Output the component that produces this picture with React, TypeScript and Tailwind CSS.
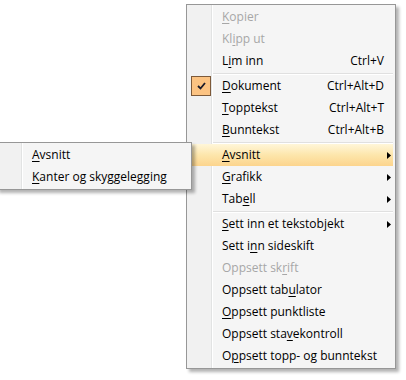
import React from 'react';

type Item = {
  label: React.ReactNode;
  shortcut?: string;
  disabled?: boolean;
  checked?: boolean;
  sub?: boolean;
  active?: boolean;
  sep?: boolean;
};

const U = ({ children }: { children: React.ReactNode }) => (
  <span className="underline underline-offset-[2px] decoration-[1px]">{children}</span>
);

const items: Item[] = [
  { label: <><U>K</U>opier</>, disabled: true },
  { label: <>Kl<U>i</U>pp ut</>, disabled: true },
  { label: <>L<U>i</U>m inn</>, shortcut: 'Ctrl+V' },
  { sep: true, label: null },
  { label: <><U>D</U>okument</>, shortcut: 'Ctrl+Alt+D', checked: true },
  { label: <><U>T</U>opptekst</>, shortcut: 'Ctrl+Alt+T' },
  { label: <><U>B</U>unntekst</>, shortcut: 'Ctrl+Alt+B' },
  { sep: true, label: null },
  { label: <><U>A</U>vsnitt</>, sub: true, active: true },
  { label: <><U>G</U>rafikk</>, sub: true },
  { label: <>Tab<U>e</U>ll</>, sub: true },
  { sep: true, label: null },
  { label: <><U>S</U>ett inn et tekstobjekt</>, sub: true },
  { label: <>Sett i<U>n</U>n sideskift</> },
  { label: <>Oppsett sk<U>r</U>ift</>, disabled: true },
  { label: <>Oppsett tab<U>u</U>lator</> },
  { label: <><U>O</U>ppsett punktliste</> },
  { label: <>Oppsett sta<U>v</U>ekontroll</> },
  { label: <>O<U>p</U>psett topp- og bunntekst</> },
];

const gutterBg =
  'bg-[linear-gradient(to_right,#f1f1f1_0px,#f1f1f1_24px,#e2e3e3_24px,#e2e3e3_25px,#ffffff_25px,#ffffff_26px,#f5f5f5_26px)]';

const Row = ({ item }: { item: Item }) => {
  if (item.sep) {
    return (
      <div className="h-[3px] ml-[24px] flex flex-col justify-center">
        <div className="h-px bg-[#e0e0e0]" />
        <div className="h-px bg-white" />
      </div>
    );
  }
  return (
    <div
      className={`relative h-[22px] flex items-center pl-[33px] ${
        item.active ? 'bg-gradient-to-b from-[#fff6d9] via-[#fde6ab] to-[#fcd48d]' : ''
      } ${item.disabled ? 'text-[#a7a7a7]' : 'text-black'}`}
    >
      {item.checked && (
        <div className="absolute left-[2px] top-[1px] w-[20px] h-[20px] border border-[#7d5a3a] bg-[#fcc382] flex items-center justify-center">
          <svg width="9" height="8" viewBox="0 0 9 8">
            <path d="M1 4 L3.5 6.5 L8 1" fill="none" stroke="#1a1a2a" strokeWidth="1.8" />
          </svg>
        </div>
      )}
      <span className="flex-1 whitespace-nowrap">{item.label}</span>
      {item.shortcut && <span className="pr-[9px] whitespace-nowrap">{item.shortcut}</span>}
      {item.sub && (
        <svg className="mr-[2px]" width="4" height="7" viewBox="0 0 4 7">
          <path d="M0 0 L4 3.5 L0 7 Z" fill="#000" />
        </svg>
      )}
    </div>
  );
};

export default function App() {
  return (
    <div
      className="relative w-[406px] h-[380px] bg-white overflow-hidden text-[12px] leading-none"
      style={{ fontFamily: '"Open Sans", "Noto Sans", sans-serif' }}
    >
      <div
        className={`absolute left-[186px] top-[4px] w-[210px] border border-[#979797] ${gutterBg} p-[1px] px-[2px] shadow-[3px_3px_3px_rgba(0,0,0,0.3)]`}
      >
        {items.map((it, i) => (
          <Row key={i} item={it} />
        ))}
      </div>

      <div
        className={`absolute left-[-4px] top-[142px] w-[196px] border border-[#979797] ${gutterBg} p-[1px] px-[2px] shadow-[3px_3px_3px_rgba(0,0,0,0.3)]`}
      >
        <div className="h-[22px] flex items-center pl-[33px] whitespace-nowrap">
          <span><U>A</U>vsnitt</span>
        </div>
        <div className="h-[22px] flex items-center pl-[33px] whitespace-nowrap">
          <span><U>K</U>anter og skyggelegging</span>
        </div>
      </div>
    </div>
  );
}
